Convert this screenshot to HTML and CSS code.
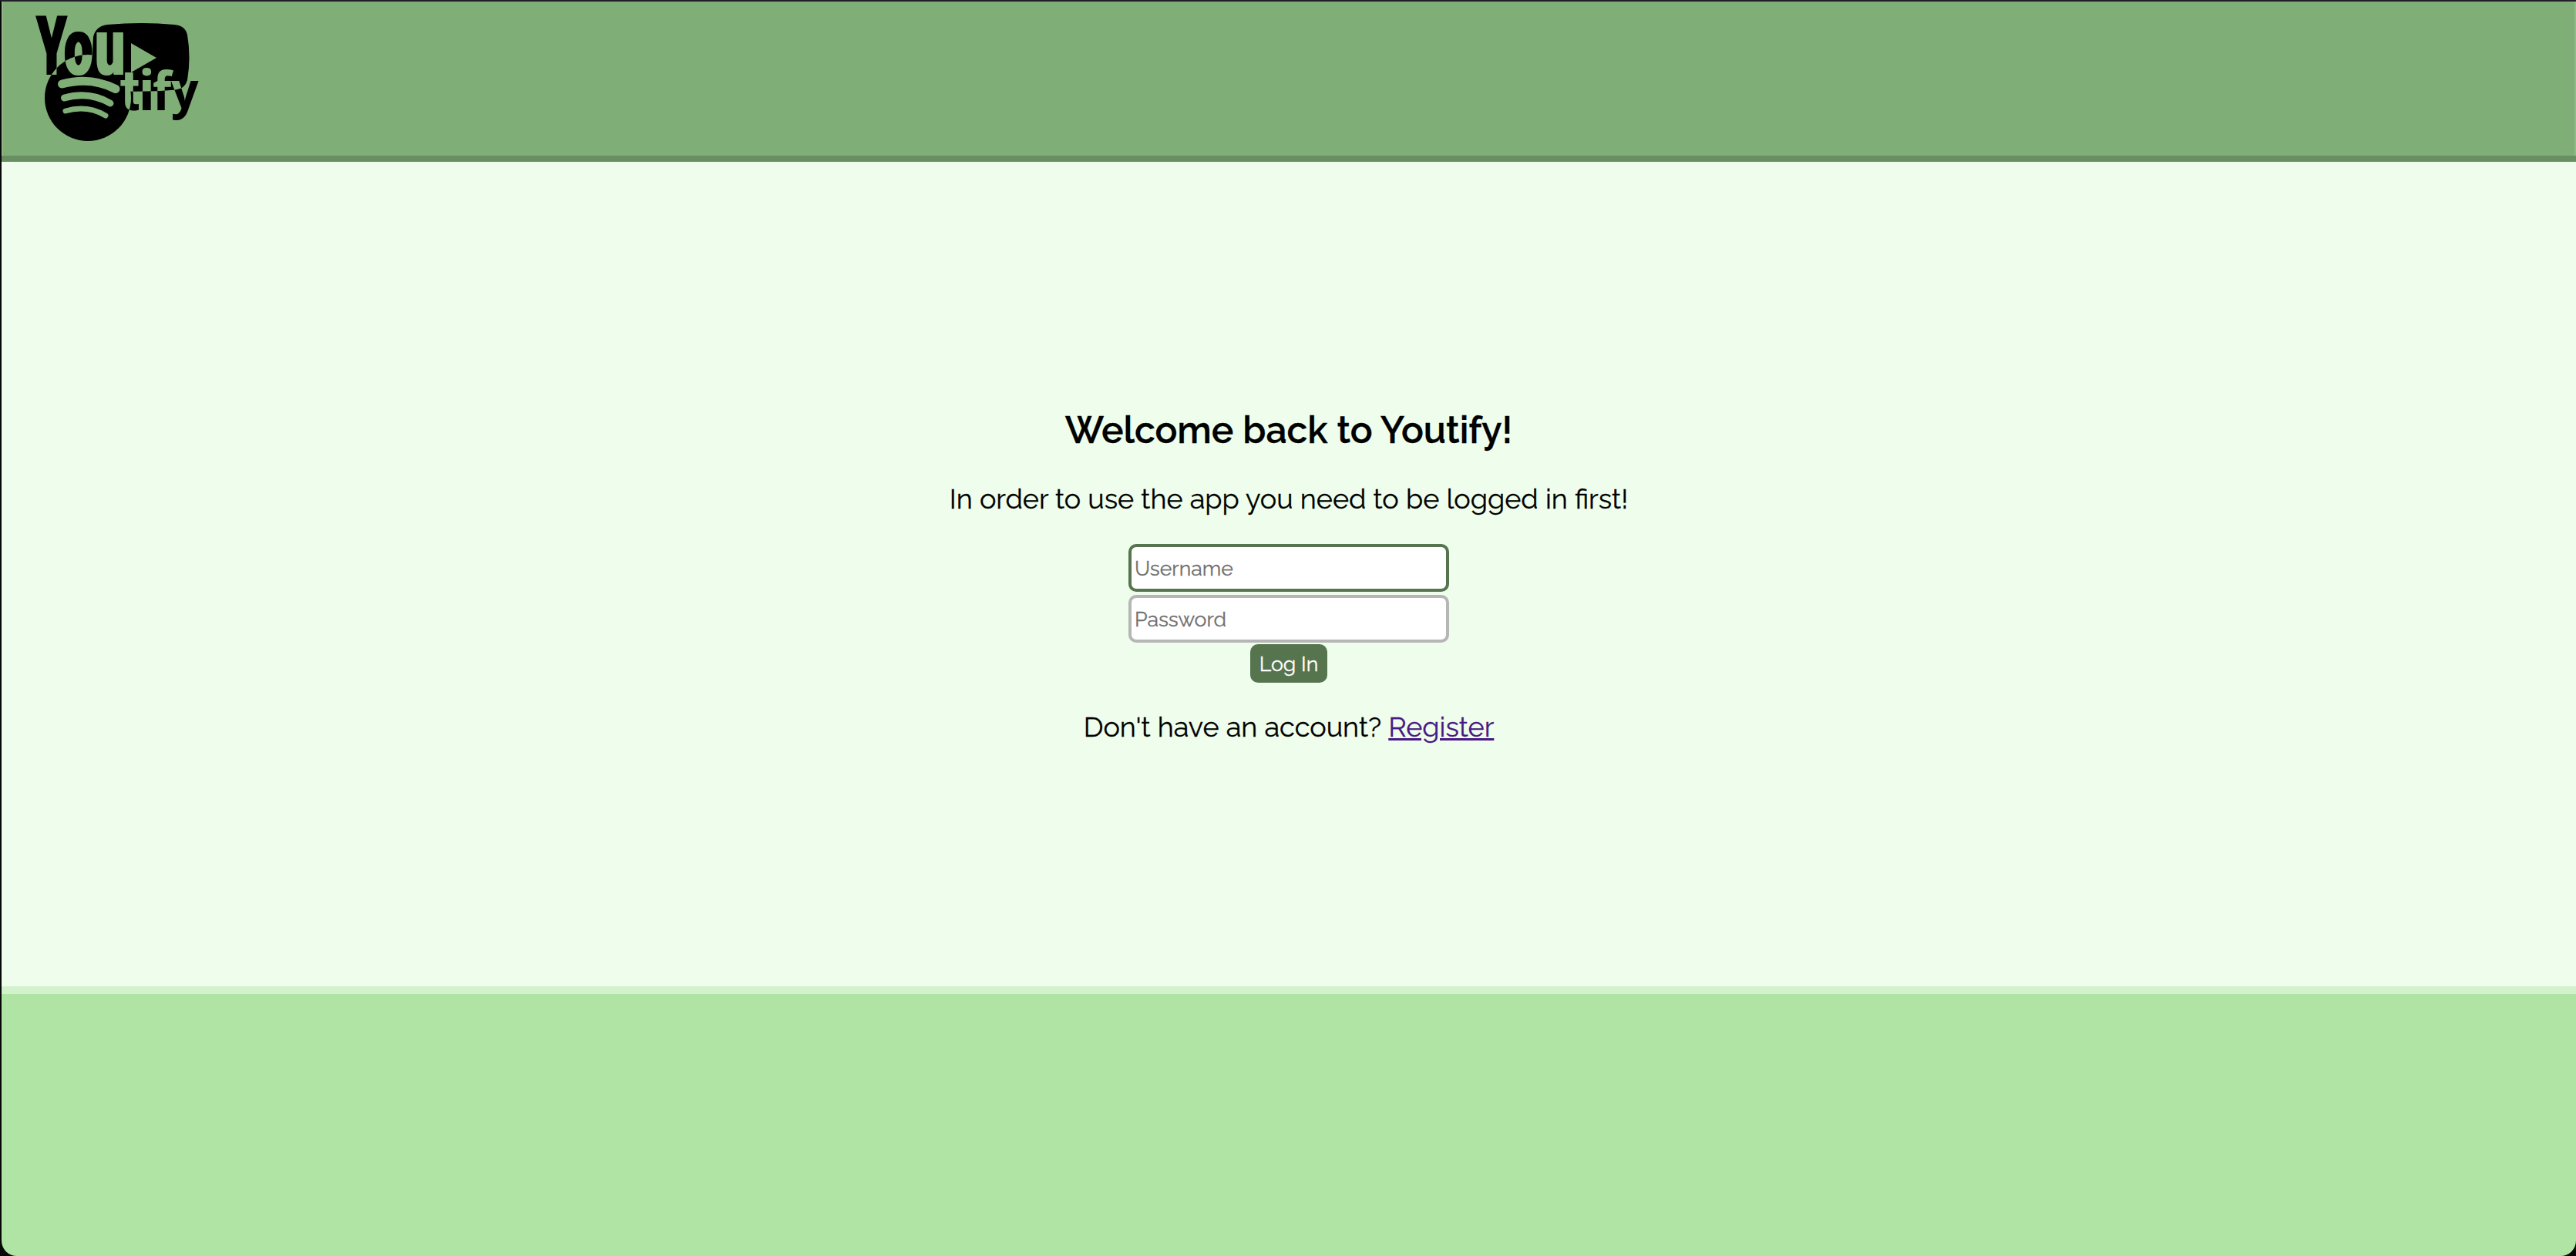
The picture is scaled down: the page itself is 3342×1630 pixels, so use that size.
FILE: index.html
```
<!DOCTYPE html>
<html lang="en">
<head>
<meta charset="utf-8">
<title>Youtify</title>
<link rel="stylesheet" href="styles.css">
</head>
<body>
<div class="window">
<header class="header">
<svg class="logo" viewBox="0 0 300 200" role="img" aria-label="Youtify">
<filter id="widen" x="-5%" y="-5%" width="110%" height="110%"><feMorphology operator="dilate" radius="1 0"/></filter>
<mask id="logo-mask" maskUnits="userSpaceOnUse" x="0" y="0" width="300" height="200">
<g class="layers">
<rect width="300" height="200" fill="#000"/>
<g fill="#fff">
<circle cx="114" cy="127" r="56"/>
<path d="M139 32Q185 28 226 32Q240 33 243 45Q248 75 243 104Q240 115 228 116.500Q190 120 140 118Q121 117 121 104Q119 75 121 48Q124 34 139 32Z"/>
</g>
<path fill="#000" d="M170 56L203 75L170 94Z"/>
<g fill="none" stroke="#000" stroke-linecap="round">
<path stroke-width="11" d="M80.500 109Q118 99 150 115.500"/>
<path stroke-width="9" d="M83.500 127Q116 118 143 134"/>
<path stroke-width="7" d="M85 144Q113 136 137 150"/>
</g>
<g class="you">
<text transform="translate(47.300 97) scale(.58 1)">Y</text>
<text transform="translate(83.300 97) scale(.61 .965)">o</text>
<text transform="translate(123.500 97) scale(.63 .965)">u</text>
</g>
<g class="tify">
<text class="tify-t" transform="translate(156 143)">t</text>
<text transform="translate(179.500 143)">i</text>
<text transform="translate(198 143) scale(.88 .98)">f</text>
<text transform="translate(222 139.500) scale(.88 .91)">y</text>
</g>
</g>
</mask>
<rect width="300" height="200" mask="url(#logo-mask)"/>
</svg>
</header>
<main class="main">
<h1 class="title">Welcome back to Youtify!</h1>
<p class="text">In order to use the app you need to be logged in first!</p>
<form class="form">
<input class="field field-active" type="text" placeholder="Username">
<input class="field" type="password" placeholder="Password">
<button class="submit" type="button">Log In</button>
</form>
<p class="text signup">Don't have an account? <a class="link" href="#">Register</a></p>
</main>
<footer class="footer"></footer>
</div>
</body>
</html>
```
FILE: styles.css
```
* { box-sizing: border-box; }
body { margin: 0; background: #050806; color: #000; font-family: Raleway, Lato, sans-serif; }
.window { display: flex; flex-direction: column; height: 1630px; padding-left: 2px; border-top: 2px solid #211f27; }
.header { height: 208px; background: #7fae76; border-bottom: 8px solid #688f61; box-shadow: inset 2px 0 #93b98b, inset -2px 0 #93b98b; }
.logo { display: block; width: 300px; height: 200px; margin: -2px 0 0 -2px; }
.layers { isolation: isolate; }
.you, .tify { fill: #fff; mix-blend-mode: difference; }
.you { font: 900 108px Roboto, sans-serif; filter: url(#widen); }
.tify { font: 700 71px "Open Sans", sans-serif; }
.tify-t { font: 700 75px Roboto, sans-serif; }
.main { display: flex; flex-direction: column; align-items: center; height: 1070px; padding-top: 320px; background: #effeec; -webkit-text-stroke: .3px; }
.title { margin: 0; font-size: 48px; line-height: 56px; font-weight: 600; }
.text { margin: 40px 0 0; font-size: 36px; line-height: 42px; }
.form { display: flex; flex-direction: column; align-items: center; margin-top: 38px; }
.field { width: 416px; height: 62px; margin-bottom: 4px; padding: 2px 4px; border: 4px solid #b6b6b6; border-radius: 10px; background: #fff; font: 26.67px Raleway, Lato, sans-serif; }
.field-active { border-color: #56754e; outline: none; }
.field::placeholder { color: #707070; -webkit-text-stroke: .3px #707070; }
.submit { width: 100px; height: 50px; margin-top: -2px; padding: 0; border: 0; border-radius: 10px; background: #56754e; color: #fff; font: 26.67px Raleway, Lato, sans-serif; -webkit-text-stroke: .3px #fff; }
.signup { margin-top: 36px; }
.link { color: #481884; }
.footer { flex: 1; border-top: 10px solid #d2f2cc; background: #b0e4a5; border-radius: 0 0 20px 20px; }
```
